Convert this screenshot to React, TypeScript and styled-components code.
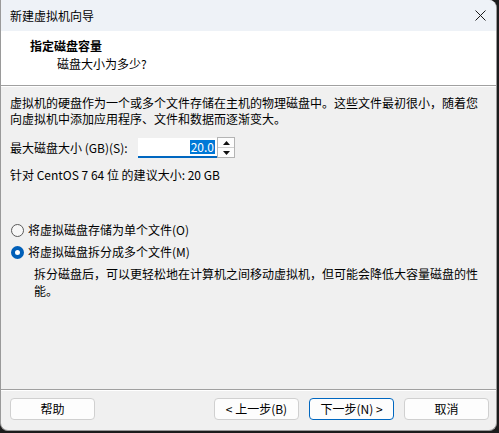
import React from 'react'
import styled, { createGlobalStyle } from 'styled-components'

const GlobalStyle = createGlobalStyle`
  html, body {
    margin: 0;
    padding: 0;
    background: #1c1c1c;
  }
  body {
    font-family: "Noto Sans CJK SC", "Noto Sans", sans-serif;
    font-size: 12px;
    color: #000;
  }
`

const Window = styled.div`
  width: 497px;
  height: 431px;
  box-sizing: border-box;
  border-left: 1px solid #9a9a9a;
  border-right: 1px solid #9a9a9a;
  border-bottom: 1px solid #9a9a9a;
  border-radius: 0 8px 8px 8px;
  background: #f0f0f0;
  overflow: hidden;
  display: flex;
  flex-direction: column;
`

const TitleBar = styled.div`
  height: 31px;
  flex: none;
  background: #eef2f7;
  display: flex;
  align-items: center;
  justify-content: space-between;
  padding: 0 8px 0 9px;
  line-height: 16px;
`

const CloseButton = styled.div`
  width: 16px;
  height: 16px;
  display: flex;
  align-items: center;
  justify-content: center;
  margin-top: -1px;
`

const Header = styled.div`
  height: 55px;
  flex: none;
  background: #fff;
  box-sizing: border-box;
  padding: 6px 0 0 29px;
  border-bottom: 1px solid #a0a0a0;
  box-shadow: 0 1px 0 #fff;
  line-height: 18px;
`

const HeaderTitle = styled.div`
  font-weight: bold;
`

const HeaderSub = styled.div`
  padding-left: 27px;
`

const Body = styled.div`
  flex: 1;
  padding: 9px 9px 0 9px;
  display: flex;
  flex-direction: column;
  line-height: 16px;
`

const Paragraph = styled.p`
  margin: 0;
`

const SizeRow = styled.div`
  display: flex;
  align-items: center;
  margin-top: 10px;
  height: 21px;
`

const SizeLabel = styled.span`
  width: 128px;
`

const SpinInput = styled.div`
  width: 79px;
  height: 20px;
  box-sizing: border-box;
  background: #fff;
  border-bottom: 2px solid #0067c0;
  display: flex;
  align-items: center;
  justify-content: flex-end;
  padding-right: 2px;
`

const Selected = styled.span`
  background: #0078d7;
  color: #fff;
  padding: 0 1px;
  line-height: 14px;
`

const SpinButtons = styled.div`
  width: 18px;
  height: 21px;
  box-sizing: border-box;
  border: 1px solid #b4b4b4;
  background: #fdfdfd;
  display: flex;
  flex-direction: column;
`

const SpinArrow = styled.div<{ $down?: boolean }>`
  flex: 1;
  display: flex;
  align-items: center;
  justify-content: center;
  border-top: ${p => (p.$down ? '1px solid #d0d0d0' : 'none')};
`

const Hint = styled.div`
  margin-top: 9px;
`

const RadioGroup = styled.div`
  margin-top: 39px;
  display: flex;
  flex-direction: column;
  gap: 6px;
`

const RadioRow = styled.label`
  display: flex;
  align-items: center;
  gap: 4px;
  height: 16px;
  padding-left: 1px;
`

const RadioMark = styled.span<{ $checked?: boolean }>`
  width: 13px;
  height: 13px;
  box-sizing: border-box;
  border-radius: 50%;
  flex: none;
  border: ${p => (p.$checked ? '4px solid #005fb8' : '1px solid #5a5a5a')};
  background: ${p => (p.$checked ? '#fff' : '#f7f7f7')};
`

const RadioNote = styled.div`
  padding-left: 24px;
  margin-top: 5px;
  line-height: 17px;
  width: 450px;
`

const Footer = styled.div`
  flex: none;
  height: 38px;
  border-top: 1px solid #a0a0a0;
  box-shadow: inset 0 1px 0 #fff;
  display: flex;
  align-items: center;
  padding: 0 7px 0 9px;
  margin-bottom: 2px;
`

const Button = styled.button<{ $primary?: boolean }>`
  width: 85px;
  height: 22px;
  box-sizing: border-box;
  font: inherit;
  font-size: 12px;
  line-height: 14px;
  color: #000;
  background: #fdfdfd;
  border: 1px solid ${p => (p.$primary ? '#0067c0' : '#d0d0d0')};
  border-radius: 4px;
  padding: 0;
  margin-left: 10px;
  &:first-child {
    margin-left: 0;
    margin-right: auto;
  }
`

export default function App() {
  return (
    <>
      <GlobalStyle />
      <Window>
        <TitleBar>
          <span>新建虚拟机向导</span>
          <CloseButton>
            <svg width="11" height="11" viewBox="0 0 11 11">
              <path d="M0.5 0.5 L10.5 10.5 M10.5 0.5 L0.5 10.5" stroke="#1a1a1a" strokeWidth="1" />
            </svg>
          </CloseButton>
        </TitleBar>
        <Header>
          <HeaderTitle>指定磁盘容量</HeaderTitle>
          <HeaderSub>磁盘大小为多少?</HeaderSub>
        </Header>
        <Body>
          <Paragraph>
            虚拟机的硬盘作为一个或多个文件存储在主机的物理磁盘中。这些文件最初很小，随着您向虚拟机中添加应用程序、文件和数据而逐渐变大。
          </Paragraph>
          <SizeRow>
            <SizeLabel>最大磁盘大小 (GB)(S):</SizeLabel>
            <SpinInput>
              <Selected>20.0</Selected>
            </SpinInput>
            <SpinButtons>
              <SpinArrow>
                <svg width="7" height="4" viewBox="0 0 7 4">
                  <path d="M0 4 L3.5 0 L7 4 Z" fill="#111" />
                </svg>
              </SpinArrow>
              <SpinArrow $down>
                <svg width="7" height="4" viewBox="0 0 7 4">
                  <path d="M0 0 L3.5 4 L7 0 Z" fill="#111" />
                </svg>
              </SpinArrow>
            </SpinButtons>
          </SizeRow>
          <Hint>针对 CentOS 7 64 位 的建议大小: 20 GB</Hint>
          <RadioGroup>
            <RadioRow>
              <RadioMark />
              <span>将虚拟磁盘存储为单个文件(O)</span>
            </RadioRow>
            <RadioRow>
              <RadioMark $checked />
              <span>将虚拟磁盘拆分成多个文件(M)</span>
            </RadioRow>
          </RadioGroup>
          <RadioNote>
            拆分磁盘后，可以更轻松地在计算机之间移动虚拟机，但可能会降低大容量磁盘的性能。
          </RadioNote>
        </Body>
        <Footer>
          <Button>帮助</Button>
          <Button>&lt; 上一步(B)</Button>
          <Button $primary>下一步(N) &gt;</Button>
          <Button>取消</Button>
        </Footer>
      </Window>
    </>
  )
}
